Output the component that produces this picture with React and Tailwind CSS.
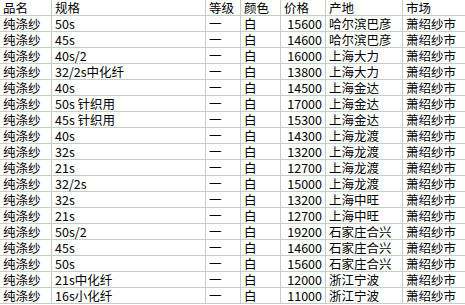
import React from "react";

const rows = [
  ["50s", "15600", "哈尔滨巴彦"],
  ["45s", "14600", "哈尔滨巴彦"],
  ["40s/2", "16000", "上海大力"],
  ["32/2s中化纤", "13800", "上海大力"],
  ["40s", "14500", "上海金达"],
  ["50s 针织用", "17000", "上海金达"],
  ["45s 针织用", "15300", "上海金达"],
  ["40s", "14300", "上海龙渡"],
  ["32s", "13200", "上海龙渡"],
  ["21s", "12700", "上海龙渡"],
  ["32/2s", "15000", "上海龙渡"],
  ["32s", "13200", "上海中旺"],
  ["21s", "12700", "上海中旺"],
  ["50s/2", "19200", "石家庄合兴"],
  ["45s", "14600", "石家庄合兴"],
  ["50s", "15600", "石家庄合兴"],
  ["21s中化纤", "12000", "浙江宁波"],
  ["16s小化纤", "11000", "浙江宁波"],
];

const cell =
  "h-4 border-b border-r border-[#c4cfc4] px-[3px] leading-[15px] whitespace-nowrap";

export default function App() {
  return (
    <div
      className="w-[465px] h-[305px] bg-white text-black text-[12.5px] overflow-hidden"
      style={{ fontFamily: '"Noto Sans CJK SC", sans-serif' }}
    >
      <div className="grid grid-cols-[52px_154px_35px_40px_45px_77px_62px]">
        {/* header */}
        <div className={cell}>品名</div>
        <div className={cell}>规格</div>
        <div className={cell}>等级</div>
        <div className={cell}>颜色</div>
        <div className={cell}>价格</div>
        <div className={cell}>产地</div>
        <div className={cell + " border-r-0"}>市场</div>

        {rows.map(([spec, price, place], i) => (
          <React.Fragment key={i}>
            <div className={cell}>纯涤纱</div>
            <div className={cell}>{spec}</div>
            <div className={cell}>一</div>
            <div className={cell}>白</div>
            <div className={cell + " text-right"}>{price}</div>
            <div className={cell}>{place}</div>
            <div className={cell + " border-r-0"}>萧绍纱市</div>
          </React.Fragment>
        ))}
      </div>
    </div>
  );
}
